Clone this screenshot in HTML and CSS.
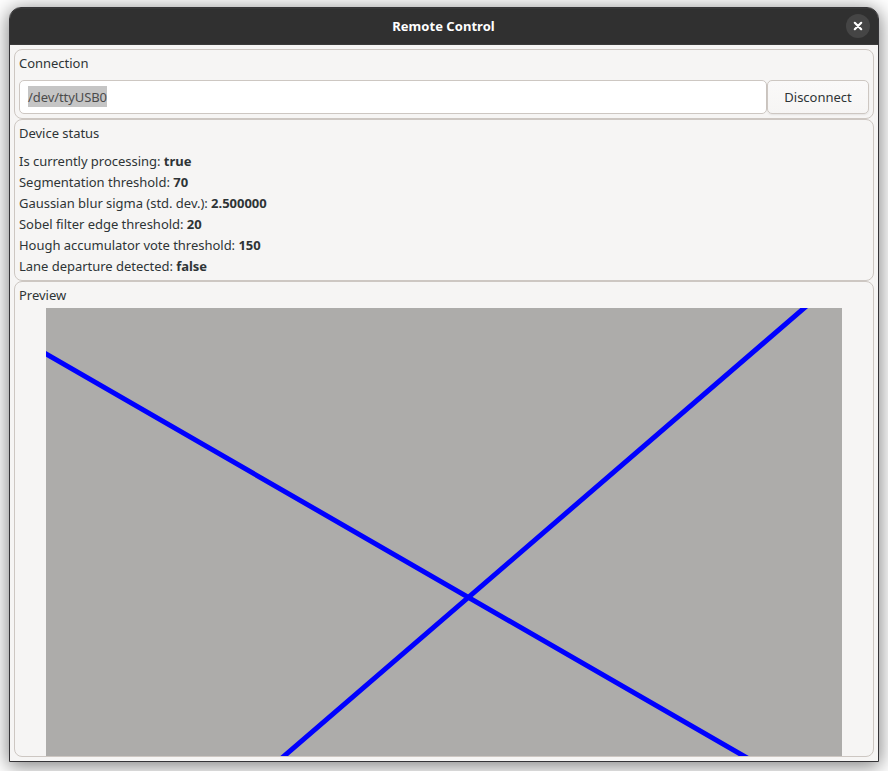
FILE: index.html
```html
<!DOCTYPE html>
<html lang="en">
<head>
<meta charset="utf-8">
<title>Remote Control</title>
<link rel="stylesheet" href="styles.css">
</head>
<body>
<div class="window">
  <header class="titlebar">
    <h1 class="title">Remote Control</h1>
    <button class="close" aria-label="Close">
      <svg width="10" height="10" viewBox="0 0 10 10"><path d="M1.8 1.8 8.2 8.2M8.2 1.8 1.8 8.2"/></svg>
    </button>
  </header>
  <main class="content">
    <section class="frame connection">
      <h2 class="label">Connection</h2>
      <div class="row">
        <div class="entry"><span class="selected">/dev/ttyUSB0</span></div>
        <button class="button">Disconnect</button>
      </div>
    </section>
    <section class="frame status">
      <h2 class="label">Device status</h2>
      <div class="values">
        <p>Is currently processing: <b>true</b></p>
        <p>Segmentation threshold: <b>70</b></p>
        <p>Gaussian blur sigma (std. dev.): <b>2.500000</b></p>
        <p>Sobel filter edge threshold: <b>20</b></p>
        <p>Hough accumulator vote threshold: <b>150</b></p>
        <p>Lane departure detected: <b>false</b></p>
      </div>
    </section>
    <section class="frame preview">
      <h2 class="label">Preview</h2>
      <svg class="canvas" width="796" height="448" viewBox="0 0 796 448">
        <path d="M-10 40.2 708.2 454M228.9 456 769.8 -10"/>
      </svg>
    </section>
  </main>
</div>
</body>
</html>
```

FILE: styles.css
```css
* { box-sizing: border-box; }

body {
  margin: 0;
  height: 771px;
  padding: 7px 9px 9px;
  overflow: hidden;
  background: #fff;
  color: #2e3436;
  font: 13px/21px "Noto Sans", sans-serif;
  letter-spacing: -0.025px;
}

h1, h2, p { margin: 0; font-size: inherit; font-weight: 400; }

b { font-weight: 700; }

.window {
  display: flex;
  flex-direction: column;
  height: 755px;
  border: 1px solid #353437;
  border-radius: 12px 12px 0 0;
  background: #f6f5f4;
  box-shadow: 0 3px 19px 1px rgba(0, 0, 0, 0.5);
}

.titlebar {
  display: grid;
  grid-template-columns: 1fr auto 1fr;
  align-items: center;
  height: 37px;
  padding-right: 8px;
  border-bottom: 1px solid #3b3b3b;
  border-radius: 11px 11px 0 0;
  background: #303030;
  box-shadow: inset 0 1px #373737;
}

.title {
  grid-column: 2;
  padding-left: 7px;
  color: #fff;
  font-weight: 700;
  letter-spacing: 0.04px;
}

.close {
  display: grid;
  place-items: center;
  justify-self: end;
  width: 24px;
  height: 24px;
  padding: 0;
  border: 0;
  border-radius: 50%;
  background: #454545;
}

.close path { fill: none; stroke: #fff; stroke-width: 2.2; stroke-linecap: round; }

.content {
  display: flex;
  flex: 1;
  flex-direction: column;
  padding: 4px;
}

.frame {
  border: 1px solid #cdc7c2;
  border-radius: 8px;
  padding: 3px 4px 4px;
}

.connection { height: 70px; }
.status { height: 162px; }
.preview { flex: 1; padding-bottom: 0; }

.row { display: flex; margin-top: 6px; }

.entry, .button {
  height: 34px;
  border: 1px solid #cdc7c2;
  border-radius: 5px;
}

.entry {
  display: flex;
  flex: 1;
  align-items: flex-start;
  padding: 5px 8px 0;
  background: #fff;
}

.selected {
  height: 21px;
  background: #c5c5c5;
  color: #4b4b4b;
  line-height: 23px;
  letter-spacing: -0.08px;
}

.button {
  width: 102px;
  padding: 0;
  background: linear-gradient(#faf9f9, #f6f5f4);
  box-shadow: 0 1px 2px rgba(0, 0, 0, 0.07);
  color: #2e3436;
  font: inherit;
  letter-spacing: inherit;
}

.values { margin-top: 7px; }

.canvas {
  display: block;
  margin: 2px auto 0;
  background: #adacaa;
}

.canvas path { fill: none; stroke: #00f; stroke-width: 5; }
```
